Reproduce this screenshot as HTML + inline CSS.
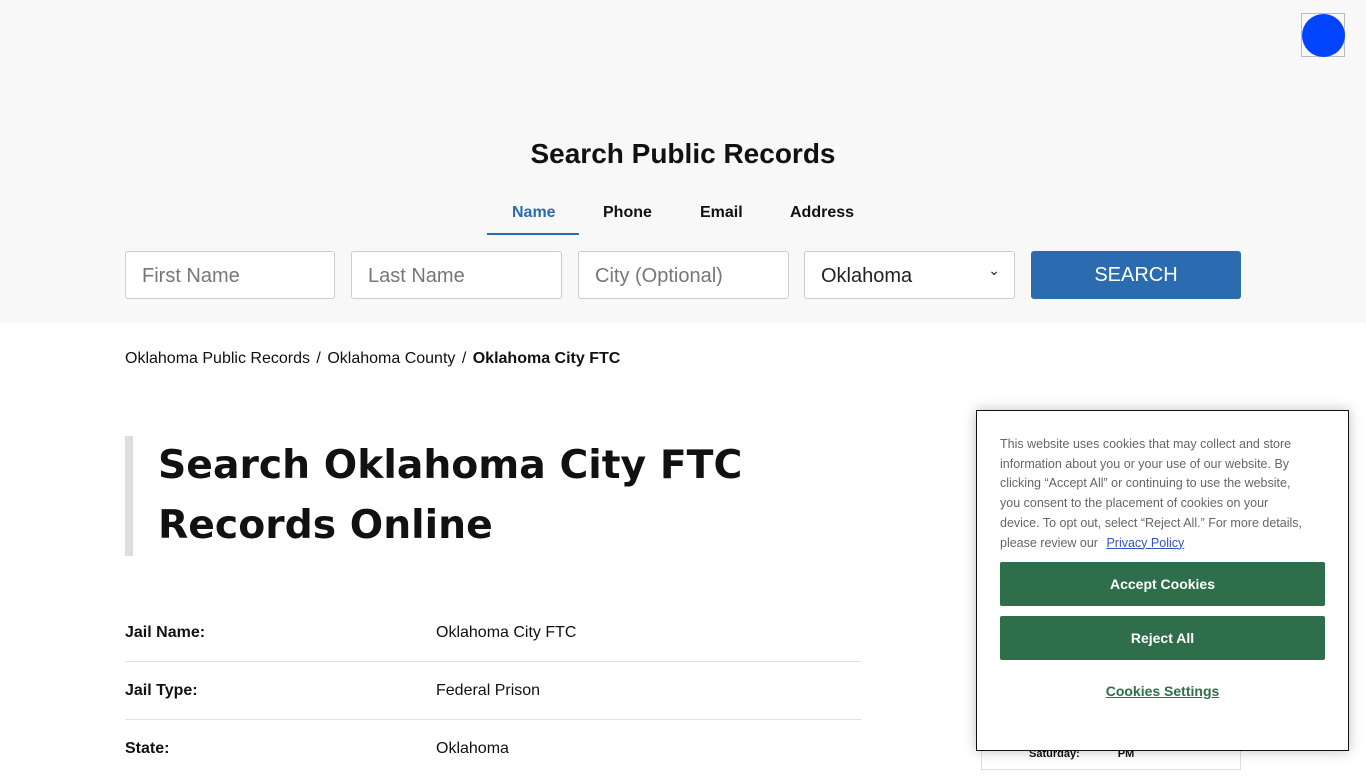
<!DOCTYPE html>
<html><head><style>
*{box-sizing:border-box;margin:0;padding:0}
body{width:1366px;height:768px;overflow:hidden;font-family:"Liberation Sans",Arial,sans-serif;background:#fff;position:relative;color:#111}
.top{position:absolute;left:0;top:0;width:1366px;height:323px;background:#f8f8f8}
.logo{position:absolute;left:1301px;top:13px;width:44px;height:44px;border:1px solid #bbb}
.logo div{position:absolute;left:0;top:0;width:43px;height:43px;border-radius:50%;background:#0044ff}
h2{position:absolute;top:138px;width:1366px;text-align:center;font-size:28px;font-weight:bold}
.tab{position:absolute;top:204px;font-size:16px;font-weight:bold}
.inp{position:absolute;top:251px;height:48px;background:#fff;border:1px solid #ccc;border-radius:3px;font-size:20px;color:#777;padding:13px 16px}
.btn{position:absolute;left:1031px;top:251px;width:210px;height:48px;background:#2b6cb0;color:#fff;font-size:20px;text-align:center;line-height:48px;border-radius:3px}
.bc{position:absolute;top:350px;left:125px;font-size:16px}
.bc i{font-style:normal;margin:0 2px}
.h1{position:absolute;left:125px;top:436px;height:120px;border-left:8px solid #ddd;padding-left:25px;font-family:"DejaVu Sans",sans-serif;font-weight:bold;font-size:39.3px;line-height:60px}
.row{position:absolute;left:125px;width:736px;height:58px;border-bottom:1px solid #e2e2e2;font-size:16px}
.row b{position:absolute;left:0;top:20px}
.row span{position:absolute;left:311px;top:20px}
.ck{position:absolute;left:976px;top:410px;width:373px;height:341px;background:#fff;border:1px solid #111;box-shadow:0 0 12px rgba(0,0,0,.25)}
.ck p{position:absolute;left:23px;top:24px;width:308px;font-size:12.5px;line-height:19.7px;color:#666}
.ck p a{color:#3355bb;margin-left:5px;text-decoration:underline}
.g{position:absolute;left:23px;width:325px;height:44px;background:#2f6e4a;color:#fff;font-weight:bold;font-size:14px;text-align:center;line-height:44px;border-radius:2px}
.cs{position:absolute;left:0;width:371px;top:272px;text-align:center;font-weight:bold;font-size:14px;color:#2f6e4a;text-decoration:underline}
</style></head><body>
<div class="top"></div>
<div class="logo"><div></div></div>
<h2>Search Public Records</h2>
<div class="tab" style="left:512px;color:#2b6cb0">Name</div>
<div style="position:absolute;left:487px;top:233px;width:92px;height:2px;background:#2b6cb0"></div>
<div class="tab" style="left:603px">Phone</div>
<div class="tab" style="left:700px">Email</div>
<div class="tab" style="left:790px">Address</div>
<div class="inp" style="left:125px;width:210px">First Name</div>
<div class="inp" style="left:351px;width:211px">Last Name</div>
<div class="inp" style="left:578px;width:211px">City (Optional)</div>
<div class="inp" style="left:804px;width:211px;color:#222">Oklahoma<span style="position:absolute;right:14px;top:10px;font-size:14px">&#8964;</span></div>
<div class="btn">SEARCH</div>
<div class="bc">Oklahoma Public Records <i>/</i> Oklahoma County <i>/</i> <b>Oklahoma City FTC</b></div>
<div class="h1">Search Oklahoma City FTC<br>Records Online</div>
<div class="row" style="top:604px"><b>Jail Name:</b><span>Oklahoma City FTC</span></div>
<div class="row" style="top:662px"><b>Jail Type:</b><span>Federal Prison</span></div>
<div class="row" style="top:720px;border:0"><b>State:</b><span>Oklahoma</span></div>
<div style="position:absolute;left:981px;top:740px;width:260px;height:30px;border:1px solid #ddd;font-size:11px;font-weight:bold;padding:7px 0 0 47px">Saturday:<span style="margin-left:38px">PM</span></div>
<div class="ck">
<p>This website uses cookies that may collect and store information about you or your use of our website. By clicking “Accept All” or continuing to use the website, you consent to the placement of cookies on your device. To opt out, select “Reject All.” For more details, please review our <a>Privacy Policy</a></p>
<div class="g" style="top:151px">Accept Cookies</div>
<div class="g" style="top:205px">Reject All</div>
<div class="cs">Cookies Settings</div>
</div>
</body></html>
